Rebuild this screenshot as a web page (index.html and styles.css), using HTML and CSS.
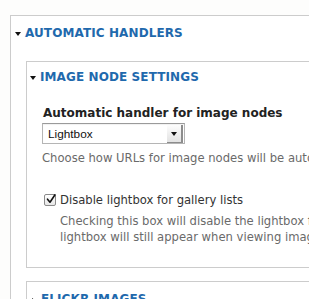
FILE: index.html
```html
<!DOCTYPE html>
<html>
<head>
<meta charset="utf-8">
<link rel="stylesheet" href="styles.css">
</head>
<body>
<div class="page">
  <div class="fieldset outer">
    <div class="legend">
      <span class="tri down"></span><span class="legend-text">AUTOMATIC HANDLERS</span>
    </div>
    <div class="outer-body">
      <div class="fieldset inner">
        <div class="legend">
          <span class="tri down"></span><span class="legend-text">IMAGE NODE SETTINGS</span>
        </div>
        <div class="inner-body">
          <div class="label">Automatic handler for image nodes</div>
          <div class="select">
            <span class="select-text">Lightbox</span>
            <span class="select-btn"><span class="select-arrow"></span></span>
          </div>
          <div class="desc">Choose how URLs for image nodes will be automatically handled.</div>
          <div class="check-row">
            <span class="checkbox">
              <svg width="12" height="12" viewBox="0 0 12 12"><path d="M2.5 6.2 L5 9.2 L10 1.8" fill="none" stroke="#111" stroke-width="1.6" stroke-linecap="round" stroke-linejoin="round"/></svg>
            </span>
            <span class="check-label">Disable lightbox for gallery lists</span>
          </div>
          <div class="check-desc">Checking this box will disable the lightbox for images in gallery lists. The<br>lightbox will still appear when viewing images individually.</div>
        </div>
      </div>
      <div class="fieldset inner collapsed">
        <div class="legend">
          <span class="tri right"></span><span class="legend-text">FLICKR IMAGES</span>
        </div>
      </div>
    </div>
  </div>
</div>
</body>
</html>
```

FILE: styles.css
```css
html, body {
  margin: 0;
  padding: 0;
  background: #fdfdfc;
  overflow: hidden;
  font-family: "DejaVu Sans", Verdana, sans-serif;
}
.page {
  width: 309px;
  height: 299px;
  overflow: hidden;
  padding-top: 15px;
  box-sizing: border-box;
}
.fieldset {
  border: 1px solid #cccccc;
  border-right: none;
  background: #fff;
  width: 600px;
}
.outer {
  margin-left: 10px;
  border-bottom: none;
  height: 400px;
}
.legend {
  display: flex;
  align-items: center;
  height: 16px;
  padding-left: 4px;
}
.outer > .legend {
  margin-top: 9px;
}
.legend-text {
  font-weight: bold;
  font-size: 12px;
  line-height: 16px;
  color: #1f69ad;
  margin-left: 4px;
  letter-spacing: 0.1px;
}
.tri {
  display: block;
  width: 0;
  height: 0;
}
.tri.down {
  border-left: 3.5px solid transparent;
  border-right: 3.5px solid transparent;
  border-top: 4px solid #111;
  margin-top: 1px;
}
.tri.right {
  border-top: 3.5px solid transparent;
  border-bottom: 3.5px solid transparent;
  border-left: 4px solid #111;
  margin-left: 2px;
  margin-right: 1px;
  margin-top: 4px;
}
.outer-body {
  padding-left: 15px;
  padding-top: 20px;
}
.inner > .legend {
  margin-top: 7px;
  padding-left: 3px;
}
.inner-body {
  padding: 20px 0 22px 15px;
}
.label {
  font-weight: bold;
  font-size: 12px;
  line-height: 16px;
  color: #222;
  padding-left: 1px;
}
.select {
  margin-top: 2px;
  width: 143px;
  height: 21px;
  box-sizing: border-box;
  border: 1px solid #b5b5b5;
  border-top-color: #9a9a9a;
  display: flex;
  align-items: center;
  background: #fff;
  box-shadow: inset 0 1px 1px rgba(0,0,0,0.06);
}
.select-text {
  font-family: "Liberation Sans", Arial, sans-serif;
  font-size: 11.8px;
  color: #111;
  padding-left: 5px;
  flex: 1;
}
.select-btn {
  width: 16px;
  height: 18px;
  margin-right: 1px;
  background: linear-gradient(#fdfdfd, #e2e2e2);
  border-right: 2px solid #8c8c8c;
  border-bottom: 1px solid #8c8c8c;
  box-sizing: border-box;
  display: flex;
  align-items: center;
  justify-content: center;
  align-self: flex-start;
  margin-top: 1px;
}
.select-arrow {
  width: 0;
  height: 0;
  border-left: 3px solid transparent;
  border-right: 3px solid transparent;
  border-top: 4px solid #111;
}
.desc {
  margin-top: 6px;
  font-size: 11.6px;
  line-height: 16px;
  color: #6a6a6a;
  white-space: nowrap;
}
.check-row {
  margin-top: 26px;
  display: flex;
  align-items: center;
  height: 16px;
  padding-left: 2px;
}
.checkbox {
  width: 12px;
  height: 12px;
  box-sizing: border-box;
  border: 1px solid #8a8a8a;
  border-radius: 2px;
  background: linear-gradient(#ffffff, #e6e6e6);
  position: relative;
}
.checkbox svg {
  position: absolute;
  left: 0;
  top: -2px;
}
.check-label {
  font-size: 11.6px;
  line-height: 16px;
  color: #333;
  margin-left: 4px;
}
.check-desc {
  margin-top: 6px;
  padding-left: 18px;
  font-size: 11.6px;
  line-height: 15.5px;
  color: #6a6a6a;
  white-space: nowrap;
}
.outer-body > .inner + .inner {
  margin-top: 13px;
}
.collapsed {
  height: 60px;
}
.collapsed > .legend {
  margin-top: 9px;
}
```
